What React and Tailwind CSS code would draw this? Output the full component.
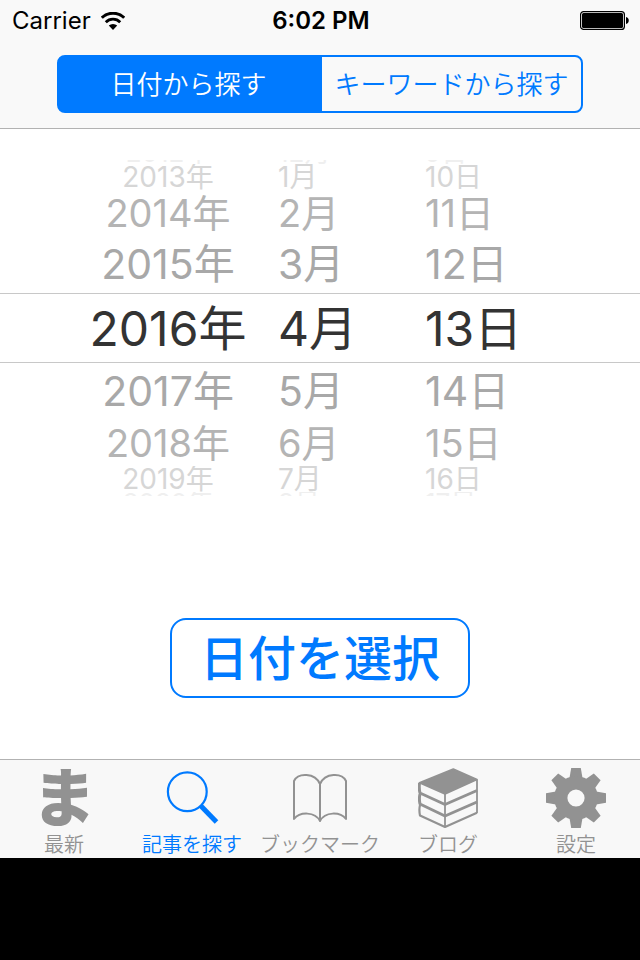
import { useState } from "react";
import clsx from "clsx";

const pickerRows = [
  { year: 2012, month: 12, day: 9, style: "h-1 content-end text-[26px] leading-[22px] text-[#efefef]" },
  { year: 2013, month: 1, day: 10, style: "h-[26px] content-center text-[28px] leading-[26px] text-[#d6d6d6]" },
  { year: 2014, month: 2, day: 11, style: "h-[46px] content-center text-[38px] leading-[46px] text-[#b4b4b4]" },
  { year: 2015, month: 3, day: 12, style: "h-[57px] content-center text-[41px] leading-[57px] text-[#a8a8a8]" },
  {
    year: 2016,
    month: 4,
    day: 13,
    selected: true,
    style: "h-[70px] content-end border-y border-[#c8c8c8] text-[48px] leading-[66px] text-[#333333]",
  },
  { year: 2017, month: 5, day: 14, style: "h-[57px] content-center text-[41px] leading-[57px] text-[#a8a8a8]" },
  { year: 2018, month: 6, day: 15, style: "h-[46px] content-center text-[38px] leading-[46px] text-[#b4b4b4]" },
  { year: 2019, month: 7, day: 16, style: "h-[26px] content-center text-[28px] leading-[26px] text-[#d6d6d6]" },
  { year: 2020, month: 8, day: 17, style: "h-1 content-start text-[26px] leading-[22px] text-[#efefef]" },
];

const segments = [
  { id: "date", label: "日付から探す", shape: "rounded-l-lg" },
  { id: "keyword", label: "キーワードから探す", shape: "rounded-r-lg" },
];

const tabs = [
  { id: "latest", label: "最新", Icon: LatestIcon },
  { id: "search", label: "記事を探す", Icon: SearchIcon },
  { id: "bookmark", label: "ブックマーク", Icon: BookIcon },
  { id: "blog", label: "ブログ", Icon: BooksIcon },
  { id: "settings", label: "設定", Icon: GearIcon },
];

function LatestIcon() {
  return (
    <span
      aria-hidden="true"
      className="flex h-[60px] items-center justify-center text-[64px] leading-[60px] font-black"
    >
      ま
    </span>
  );
}

function SearchIcon() {
  return (
    <svg viewBox="0 0 60 60" className="size-[60px]" fill="none" stroke="currentColor" aria-hidden="true">
      <circle cx="25.3" cy="23.7" r="19.4" strokeWidth="2.2" />
      <path d="M38.5 37.5 54.5 54" strokeWidth="5" />
    </svg>
  );
}

function BookIcon() {
  return (
    <svg
      viewBox="0 0 60 60"
      className="size-[60px]"
      fill="none"
      stroke="currentColor"
      strokeWidth="2"
      strokeLinejoin="round"
      aria-hidden="true"
    >
      <path d="M4 13C8 4.500 25 4.500 30 16C35 4.500 52 4.500 56 13V51C50 43.500 35 43.500 30 53C25 43.500 10 43.500 4 51Z" />
      <path d="M30 16V53" />
    </svg>
  );
}

function BooksIcon() {
  return (
    <svg
      viewBox="0 0 60 60"
      className="size-[60px]"
      fill="none"
      stroke="currentColor"
      strokeLinejoin="round"
      aria-hidden="true"
    >
      <path d="M35.300 1 59 11.500 27 26 1.500 14.800Z" fill="currentColor" strokeWidth="1.600" />
      <path d="M1.500 15Q.8 20 2 25L27 36.500 59 22.500" strokeWidth="3" />
      <path d="M2 26Q.8 31 2 36L27 48 59 34" strokeWidth="3" />
      <path d="M2 37Q.8 42 2 47.500L27 59 59 44.800" strokeWidth="2.200" />
      <path d="M27 26V59M59 11.500V45" strokeWidth="1.800" />
    </svg>
  );
}

function GearIcon() {
  return (
    <svg viewBox="0 0 60 60" className="size-[60px]" fill="currentColor" aria-hidden="true">
      {[0, 45, 90, 135, 180, 225, 270, 315].map((angle) => (
        <path key={angle} d="M25.200 0H34.800L37.200 14H22.800Z" transform={`rotate(${angle} 30 30)`} />
      ))}
      <circle cx="30" cy="30" r="15.200" fill="none" stroke="currentColor" strokeWidth="13.200" />
    </svg>
  );
}

function WifiIcon() {
  return (
    <svg viewBox="0 0 24 18" className="h-[18px] w-6" fill="none" stroke="currentColor" aria-hidden="true">
      <path d="M.8 5.800A16 16 0 0 1 23.200 5.800" strokeWidth="3" />
      <path d="M4.800 10.200A10 10 0 0 1 19.200 10.200" strokeWidth="2.800" />
      <path d="M7.800 13.600A6 6 0 0 1 16.200 13.600L12 18Z" fill="currentColor" stroke="none" />
    </svg>
  );
}

function BatteryIcon() {
  return (
    <svg viewBox="0 0 50 20" className="h-5 w-[50px]" aria-label="Battery full">
      <rect x=".6" y=".6" width="43.800" height="17.800" rx="3" fill="none" stroke="black" strokeWidth="1.200" />
      <rect x="2" y="2" width="41" height="15" rx="1.500" />
      <path d="M46 6C49.700 6.500 49.700 12.500 46 13Z" />
    </svg>
  );
}

function StatusBar() {
  return (
    <div className="grid h-[42px] grid-cols-3 items-center pr-2.5 pl-3 text-[24px] leading-[42px] text-black">
      <div className="flex items-center gap-2.5">
        <span>Carrier</span>
        <WifiIcon />
      </div>
      <span className="text-center font-semibold">6:02 PM</span>
      <div className="flex justify-end">
        <BatteryIcon />
      </div>
    </div>
  );
}

function DatePicker() {
  return (
    <div className="pt-[31px]" role="listbox" aria-label="日付">
      {pickerRows.map((row) => (
        <div
          key={row.year}
          role="option"
          aria-selected={Boolean(row.selected)}
          className={clsx("grid grid-cols-[278fr_147fr_215fr] overflow-hidden whitespace-nowrap", row.style)}
        >
          <span className="pl-[58px] text-center">{row.year}年</span>
          <span>{row.month}月</span>
          <span>{row.day}日</span>
        </div>
      ))}
    </div>
  );
}

export default function App() {
  const [segment, setSegment] = useState("date");
  const [tab, setTab] = useState("search");

  return (
    <div className="min-h-screen bg-black font-[Inter,'Noto_Sans_CJK_JP',sans-serif]">
      <header className="border-b border-[#b2b2b2] bg-[#f9f9f9] pb-[15px]">
        <StatusBar />
        <div className="mx-[57px] mt-[13px] grid h-[58px] grid-cols-2">
          {segments.map((item) => (
            <button
              key={item.id}
              type="button"
              aria-pressed={segment === item.id}
              onClick={() => setSegment(item.id)}
              className={clsx(
                "border-2 border-[#007aff] pt-0.5 text-[26px] leading-[52px] font-[350] whitespace-nowrap",
                item.shape,
                segment === item.id ? "bg-[#007aff] text-white" : "text-[#007aff]"
              )}
            >
              {item.label}
            </button>
          ))}
        </div>
      </header>

      <main className="bg-white pb-[61px]">
        <DatePicker />
        <div className="mt-[122px] flex justify-center">
          <button
            type="button"
            className="h-20 rounded-2xl border-2 border-[#007aff] px-7 pt-0.5 text-[48px] leading-[74px] font-medium text-[#007aff]"
          >
            日付を選択
          </button>
        </div>
      </main>

      <nav className="grid grid-cols-5 border-t border-[#b2b2b2] bg-[#f8f8f8] pt-2">
        {tabs.map(({ id, label, Icon }) => (
          <button
            key={id}
            type="button"
            aria-current={tab === id ? "page" : undefined}
            onClick={() => setTab(id)}
            className={clsx(
              "flex flex-col items-center",
              tab === id ? "text-[#007aff]" : "text-[#929292]"
            )}
          >
            <Icon />
            <span className="mt-1 text-[20px] leading-[26px] font-[350] whitespace-nowrap">{label}</span>
          </button>
        ))}
      </nav>
    </div>
  );
}
